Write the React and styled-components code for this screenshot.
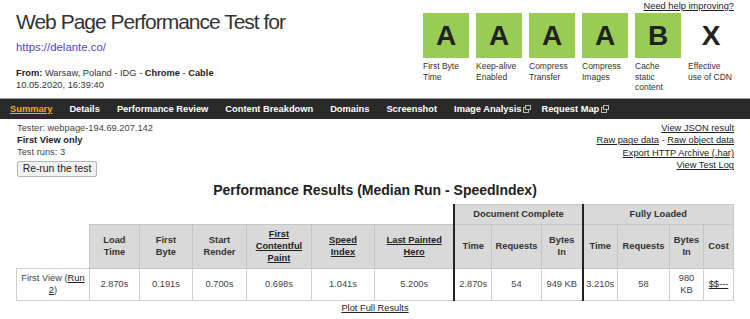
import React from "react";
import styled, { createGlobalStyle } from "styled-components";

const GlobalStyle = createGlobalStyle`
    html, body {
        margin: 0;
        padding: 0;
        background: #fff;
    }
    body {
        font-family: "Liberation Sans", Arial, sans-serif;
        color: #333;
        width: 750px;
        overflow: hidden;
    }
`;

const grades = [
    { grade: "A", label: "First Byte Time" },
    { grade: "A", label: "Keep-alive Enabled" },
    { grade: "A", label: "Compress Transfer" },
    { grade: "A", label: "Compress Images" },
    { grade: "B", label: "Cache static content" },
    { grade: "X", label: "Effective use of CDN", none: true },
];

const navItems = [
    { label: "Summary", active: true },
    { label: "Details" },
    { label: "Performance Review" },
    { label: "Content Breakdown" },
    { label: "Domains" },
    { label: "Screenshot" },
    { label: "Image Analysis", ext: true },
    { label: "Request Map", ext: true },
];

const cols = [73, 50, 53, 54, 65, 63, 80, 37, 50, 41, 35, 52, 34, 30];

const ExtIcon = () => (
    <svg width='8' height='8' viewBox='0 0 8 8'>
        <rect x='0.5' y='2.5' width='5' height='5' fill='none' stroke='#bbb' />
        <rect x='2.5' y='0.5' width='5' height='4' fill='#2a2a2a' stroke='#bbb' />
    </svg>
);

const App = () => {
    return (
        <Page>
            <GlobalStyle />
            <Header>
                <TitleBlock>
                    <Title>Web Page Performance Test for</Title>
                    <UrlLink href='#'>https://delante.co/</UrlLink>
                    <Meta>
                        <b>From:</b> Warsaw, Poland - IDG - <b>Chrome</b> -{" "}
                        <b>Cable</b>
                        <br />
                        10.05.2020, 16:39:40
                    </Meta>
                </TitleBlock>
                <GradeBlock>
                    <HelpLink href='#'>Need help improving?</HelpLink>
                    <Grades>
                        {grades.map((g, i) => (
                            <Grade key={i}>
                                <GradeBox $none={g.none}>{g.grade}</GradeBox>
                                <GradeLabel>{g.label}</GradeLabel>
                            </Grade>
                        ))}
                    </Grades>
                </GradeBlock>
            </Header>

            <Nav>
                {navItems.map((n) => (
                    <NavItem key={n.label} $active={n.active} $ext={n.ext}>
                        {n.label}
                        {n.ext && <ExtIcon />}
                    </NavItem>
                ))}
            </Nav>

            <Info>
                <div>
                    <InfoLine>Tester: webpage-194.69.207.142</InfoLine>
                    <InfoLine $bold>First View only</InfoLine>
                    <InfoLine>Test runs: 3</InfoLine>
                    <RerunButton>Re-run the test</RerunButton>
                </div>
                <RightLinks>
                    <a href='#'>View JSON result</a>
                    <span>
                        <a href='#'>Raw page data</a> -{" "}
                        <a href='#'>Raw object data</a>
                    </span>
                    <a href='#'>Export HTTP Archive (.har)</a>
                    <a href='#'>View Test Log</a>
                </RightLinks>
            </Info>

            <Heading>Performance Results (Median Run - SpeedIndex)</Heading>

            <Results>
                <colgroup>
                    {cols.map((w, i) => (
                        <col key={i} style={{ width: w }} />
                    ))}
                </colgroup>
                <tbody>
                    <GroupRow>
                        <Blank colSpan={7} />
                        <Th colSpan={3} $thick>
                            Document Complete
                        </Th>
                        <Th colSpan={4} $thick>
                            Fully Loaded
                        </Th>
                    </GroupRow>
                    <HeadRow>
                        <Blank />
                        <Th>
                            Load
                            <br />
                            Time
                        </Th>
                        <Th>
                            First
                            <br />
                            Byte
                        </Th>
                        <Th>
                            Start
                            <br />
                            Render
                        </Th>
                        <Th>
                            <u>
                                First
                                <br />
                                Contentful
                                <br />
                                Paint
                            </u>
                        </Th>
                        <Th>
                            <u>
                                Speed
                                <br />
                                Index
                            </u>
                        </Th>
                        <Th>
                            <u>
                                Last Painted
                                <br />
                                Hero
                            </u>
                        </Th>
                        <Th $thick>Time</Th>
                        <Th>Requests</Th>
                        <Th>
                            Bytes
                            <br />
                            In
                        </Th>
                        <Th $thick>Time</Th>
                        <Th>Requests</Th>
                        <Th>
                            Bytes
                            <br />
                            In
                        </Th>
                        <Th>Cost</Th>
                    </HeadRow>
                    <DataRow>
                        <Td>
                            First View (<u>Run</u>
                            <br />
                            <u>2</u>)
                        </Td>
                        <Td>2.870s</Td>
                        <Td>0.191s</Td>
                        <Td>0.700s</Td>
                        <Td>0.698s</Td>
                        <Td>1.041s</Td>
                        <Td>5.200s</Td>
                        <Td $thick>2.870s</Td>
                        <Td>54</Td>
                        <Td>949 KB</Td>
                        <Td $thick>3.210s</Td>
                        <Td>58</Td>
                        <Td>
                            980
                            <br />
                            KB
                        </Td>
                        <Td>
                            <u>$$---</u>
                        </Td>
                    </DataRow>
                </tbody>
            </Results>

            <PlotLink href='#'>Plot Full Results</PlotLink>
        </Page>
    );
};

const Page = styled.div`
    width: 750px;
    display: flex;
    flex-direction: column;
`;

const Header = styled.div`
    height: 98px;
    display: flex;
    justify-content: space-between;
    padding: 0 16px 0 16px;
`;

const TitleBlock = styled.div`
    display: flex;
    flex-direction: column;
    align-items: flex-start;
    padding-top: 10px;
`;

const Title = styled.h1`
    margin: 0;
    font-size: 21px;
    line-height: 24px;
    font-weight: normal;
    letter-spacing: -1px;
    color: #333;
`;

const UrlLink = styled.a`
    margin-top: 6px;
    font-size: 11.4px;
    line-height: 14px;
    color: #4b45c8;
    text-decoration: none;
`;

const Meta = styled.div`
    margin-top: 13px;
    font-size: 9.3px;
    line-height: 12px;
    color: #333;
    b {
        color: #222;
    }
`;

const GradeBlock = styled.div`
    display: flex;
    flex-direction: column;
    align-items: flex-end;
`;

const HelpLink = styled.a`
    font-size: 9.3px;
    line-height: 12px;
    color: #222;
    text-decoration: underline;
`;

const Grades = styled.div`
    display: flex;
    gap: 7px;
    margin-top: 1px;
`;

const Grade = styled.div`
    width: 46px;
    display: flex;
    flex-direction: column;
`;

const GradeBox = styled.div`
    height: 45px;
    display: flex;
    align-items: center;
    justify-content: center;
    background: ${({ $none }) => ($none ? "transparent" : "#98cc55")};
    color: #222;
    font-size: 28px;
    font-weight: bold;
`;

const GradeLabel = styled.div`
    margin-top: 3px;
    font-size: 8.5px;
    line-height: 10.5px;
    color: #333;
`;

const Nav = styled.div`
    height: 20px;
    background: #2a2a2a;
    display: flex;
    align-items: center;
    gap: 17px;
    padding: 0 10px;
    border-top: 1px solid #999;
`;

const NavItem = styled.a`
    display: flex;
    align-items: center;
    gap: 2px;
    margin-right: ${({ $ext }) => ($ext ? "-7px" : "0")};
    font-size: 9.3px;
    font-weight: bold;
    color: ${({ $active }) => ($active ? "#eeb011" : "#fff")};
    text-decoration: ${({ $active }) => ($active ? "underline" : "none")};
`;

const Info = styled.div`
    display: flex;
    justify-content: space-between;
    padding: 3px 16px 0 17px;
`;

const InfoLine = styled.div`
    font-size: 9.3px;
    line-height: 12px;
    color: ${({ $bold }) => ($bold ? "#222" : "#444")};
    font-weight: ${({ $bold }) => ($bold ? "bold" : "normal")};
`;

const RerunButton = styled.button`
    margin-top: 2px;
    width: 80px;
    height: 16px;
    padding: 0;
    font-family: "Liberation Sans", Arial, sans-serif;
    font-size: 10.4px;
    color: #222;
    background: #f2f2f2;
    border: 1px solid #b5b5b5;
    border-radius: 2px;
`;

const RightLinks = styled.div`
    display: flex;
    flex-direction: column;
    align-items: flex-end;
    font-size: 9.3px;
    line-height: 12.4px;
    color: #222;
    a {
        color: #222;
        text-decoration: underline;
    }
`;

const Heading = styled.h2`
    margin: 5px 0 0;
    text-align: center;
    font-size: 14px;
    line-height: 16px;
    font-weight: bold;
    color: #222;
`;

const Results = styled.table`
    margin: 6px auto 0;
    width: 717px;
    table-layout: fixed;
    border-collapse: collapse;
    font-size: 9.3px;
    line-height: 12px;
`;

const GroupRow = styled.tr`
    height: 20px;
`;

const HeadRow = styled.tr`
    height: 44px;
`;

const DataRow = styled.tr`
    height: 32px;
`;

const Blank = styled.td`
    border: none;
    background: #fff;
`;

const Th = styled.th`
    padding: 0 2px;
    background: #d9d9d9;
    border: 1px solid #c6c6c6;
    border-left: ${({ $thick }) =>
        $thick ? "2px solid #222" : "1px solid #c6c6c6"};
    color: #333;
    font-weight: bold;
    text-align: center;
    u {
        color: #222;
    }
`;

const Td = styled.td`
    padding: 0 2px;
    border: 1px solid #cfcfcf;
    border-left: ${({ $thick }) =>
        $thick ? "2px solid #222" : "1px solid #cfcfcf"};
    color: #444;
    text-align: center;
    u {
        color: #222;
    }
`;

const PlotLink = styled.a`
    align-self: center;
    margin-top: 1px;
    font-size: 9.3px;
    line-height: 12px;
    color: #222;
    text-decoration: underline;
`;

export default App;
